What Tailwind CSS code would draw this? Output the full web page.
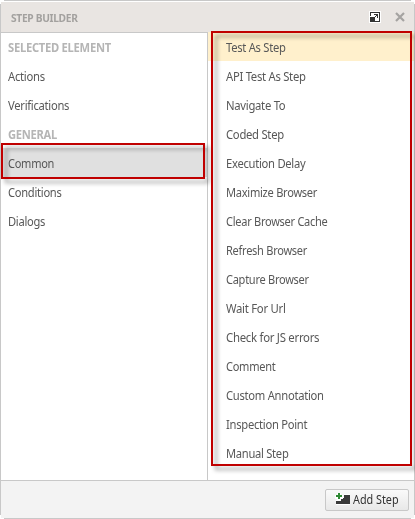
<!DOCTYPE html>
<html lang="en">
<head>
<meta charset="utf-8">
<title>Step Builder</title>
<script src="https://cdn.jsdelivr.net/npm/@tailwindcss/browser@4"></script>
</head>
<body class="bg-white">
<div class="relative w-[415px] h-[519px] overflow-hidden p-px flex flex-col bg-white text-[12px] text-[#585858] font-['Noto_Sans','Open_Sans',sans-serif]">
  <header class="h-[31px] shrink-0 mt-px -mb-px border-b border-[#c8c8c8] bg-[#e9e5e2] flex items-center pl-[10px] pr-[9px]">
    <h1 class="text-[11px] font-bold text-[#a3a19f] tracking-[-0.35px] grow pt-[3px]"><span class="inline-block origin-left scale-x-[0.93]">STEP BUILDER</span></h1>
    <svg class="w-3 h-3 mr-[14px]" viewBox="0 0 12 12" shape-rendering="crispEdges">
      <path d="M0 0h12v12H0z" fill="#fff"/>
      <path d="M1 1h10v10H1z" fill="#333"/>
      <path d="M2 2h8v8H2z" fill="#fff"/>
      <path d="M1 5h1v1H1z" fill="#fff"/>
      <path d="M1 6h5v5H1z" fill="#333"/>
      <path d="M5 3h4v4H8V5H7v1H6V5h1V4H5z" fill="#333"/>
    </svg>
    <svg class="w-[10px] h-[10px]" viewBox="0 0 10 10"><path d="M1 1l8 8M9 1L1 9" stroke="#a5a3a1" stroke-width="2.2"/></svg>
  </header>
  <main class="flex h-[449px] shrink-0">
    <nav class="w-[207px] shrink-0 border-r border-[#c8c8c8] leading-[31px] tracking-[-0.3px]">
      <div class="h-[29px] pl-[7px] font-bold text-[#b5b5b5]"><span class="inline-block origin-left scale-x-[0.935]">SELECTED ELEMENT</span></div>
      <div class="h-[29px] pl-[7px]"><span class="inline-block origin-left scale-x-[0.94]">Actions</span></div>
      <div class="h-[29px] pl-[7px]"><span class="inline-block origin-left scale-x-[0.935]">Verifications</span></div>
      <div class="h-[29px] pl-[7px] font-bold text-[#b5b5b5]"><span class="inline-block origin-left scale-x-[0.93]">GENERAL</span></div>
      <div class="h-[29px] pl-[7px] bg-[#e0e0e0]"><span class="inline-block origin-left scale-x-[0.92]">Common</span></div>
      <div class="h-[29px] pl-[7px]"><span class="inline-block origin-left scale-x-[0.93]">Conditions</span></div>
      <div class="h-[29px] pl-[7px]"><span class="inline-block origin-left scale-x-[0.93]">Dialogs</span></div>
    </nav>
    <section class="grow leading-[31px] tracking-[-0.3px]">
      <div class="h-[29px] pl-[17.5px] bg-[#fff0cc]"><span class="inline-block origin-left scale-x-[0.935]">Test As Step</span></div>
      <div class="h-[29px] pl-[17.5px]"><span class="inline-block origin-left scale-x-[0.94]">API Test As Step</span></div>
      <div class="h-[29px] pl-[17.5px]"><span class="inline-block origin-left scale-x-[0.94]">Navigate To</span></div>
      <div class="h-[29px] pl-[17.5px]"><span class="inline-block origin-left scale-x-[0.94]">Coded Step</span></div>
      <div class="h-[29px] pl-[17.5px]"><span class="inline-block origin-left scale-x-[0.935]">Execution Delay</span></div>
      <div class="h-[29px] pl-[17.5px]"><span class="inline-block origin-left scale-x-[0.925]">Maximize Browser</span></div>
      <div class="h-[29px] pl-[17.5px]"><span class="inline-block origin-left scale-x-[0.92]">Clear Browser Cache</span></div>
      <div class="h-[29px] pl-[17.5px]"><span class="inline-block origin-left scale-x-[0.92]">Refresh Browser</span></div>
      <div class="h-[29px] pl-[17.5px]"><span class="inline-block origin-left scale-x-[0.92]">Capture Browser</span></div>
      <div class="h-[29px] pl-[17.5px]"><span class="inline-block origin-left scale-x-[0.945]">Wait For Url</span></div>
      <div class="h-[29px] pl-[17.5px]"><span class="inline-block origin-left scale-x-[0.95]">Check for JS errors</span></div>
      <div class="h-[29px] pl-[17.5px]"><span class="inline-block origin-left scale-x-[0.92]">Comment</span></div>
      <div class="h-[29px] pl-[17.5px]"><span class="inline-block origin-left scale-x-[0.935]">Custom Annotation</span></div>
      <div class="h-[29px] pl-[17.5px]"><span class="inline-block origin-left scale-x-[0.935]">Inspection Point</span></div>
      <div class="h-[29px] pl-[17.5px]"><span class="inline-block origin-left scale-x-[0.93]">Manual Step</span></div>
    </section>
  </main>
  <footer class="grow -mt-px border-t border-[#c8c8c8] bg-[#f3f3f3] flex justify-end items-center pr-[5px]">
    <button class="w-[84px] h-[22px] border border-[#c8c8c8] rounded-[2px] bg-linear-to-b from-[#fafafa] to-[#e8e8e8] flex items-center pl-[9px] text-[#333] whitespace-nowrap">
      <svg class="w-[15px] h-3 mr-[3px] -mt-[2px] shrink-0" viewBox="0 0 15 12" shape-rendering="crispEdges">
        <path d="M1 12V7h4V4h4V1h6v11z" fill="#fff"/>
        <path d="M1 11V8h4V5h4V2h6v9z" fill="#3a3a3a"/>
        <path d="M2 0h4v2h2v4H6v2H2V6H0V2h2z" fill="#fff"/>
        <path d="M3 0h2v2h2v2H5v2H3V4H1V2h2z" fill="#2f8a35"/>
      </svg><span class="inline-block origin-left scale-x-[0.9]">Add Step</span>
    </button>
  </footer>
  <!-- window frame, open at the corners -->
  <div class="absolute top-0 left-[4px] right-[4px] h-px bg-[#c8c8c8]"></div>
  <div class="absolute bottom-0 left-[4px] right-[4px] h-px bg-[#c8c8c8]"></div>
  <div class="absolute left-0 top-[4px] bottom-[4px] w-px bg-[#c8c8c8]"></div>
  <div class="absolute right-0 top-[4px] bottom-[4px] w-px bg-[#c8c8c8]"></div>
  <!-- highlight frames -->
  <div class="absolute left-[1px] top-[143px] w-[204px] h-[36px] border-2 border-[#c00000] drop-shadow-[4px_4px_2px_rgba(0,0,0,0.4)]"></div>
  <div class="absolute left-[211px] top-[31px] w-[201px] h-[435px] border-2 border-[#c00000] drop-shadow-[4px_4px_2px_rgba(0,0,0,0.4)]"></div>
</div>
</body>
</html>
